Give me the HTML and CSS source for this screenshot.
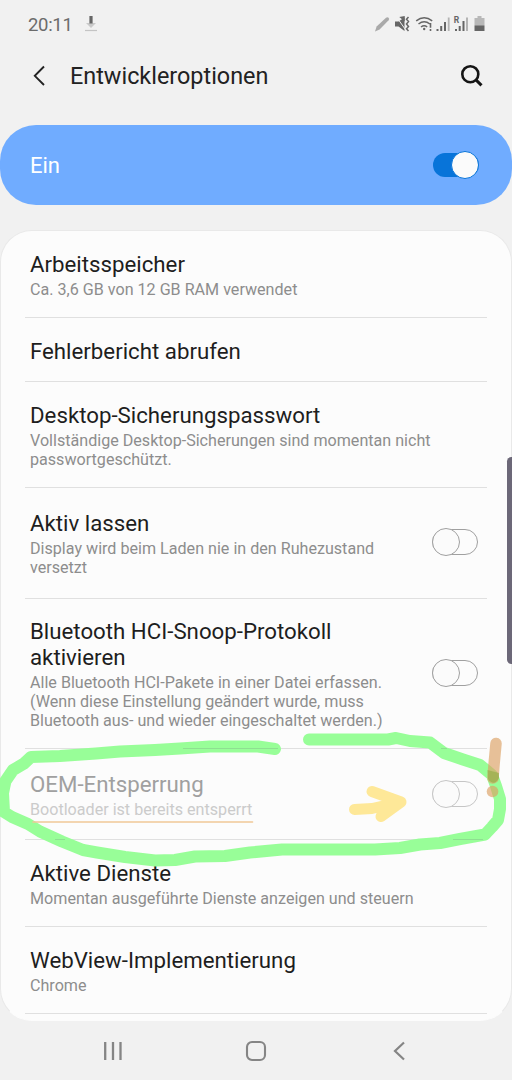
FILE: index.html
```html
<!DOCTYPE html>
<html lang="de">
<head>
<meta charset="utf-8">
<title>Entwickleroptionen</title>
<link rel="stylesheet" href="styles.css">
</head>
<body>
<div class="screen">
  <div class="statusbar">
    <span class="time">20:11</span>
    <svg class="download" width="14" height="18" viewBox="0 0 14 18"><path d="M2 8h10l-5 5z" fill="#c9c9c9"/><path d="M5.400 1h3.200v7.500H5.400z" fill="#666"/><path d="M1 15.500h12" stroke="#c4c4c4" stroke-width="1.200"/></svg>
    <svg class="indicators" width="112" height="20" viewBox="374 14 112 20">
      <path d="M375 31.500l1.600-5L386 17.800q1.400-1.200 2.600 0 1.200 1.200 0 2.500l-9 9.300z" fill="#a9a9a9"/>
      <path d="M395 21.500h3.500l6-4v13.500l-6-4.500H395z" fill="#666"/>
      <path d="M396.500 17l10 14" stroke="#f1f1f1" stroke-width="1"/>
      <path d="M401 17.500l3 2.500v-3zM408.500 17l-2 2.300 2 2.300-2 2.400 2 2.400-2 2.300 2 2.300" fill="none" stroke="#666" stroke-width="1.500"/>
      <g fill="none" stroke="#666" stroke-width="1.500"><path d="M416.200 20.800q8-6 16 0"/><path d="M418.500 24q5.700-4.500 11.400 0"/><path d="M421 27q3.200-2.500 6.200 0"/></g>
      <circle cx="424.200" cy="29" r="1.200" fill="#666"/>
      <path d="M430.500 23v4.700M430.500 29v2" stroke="#666" stroke-width="1.600"/>
      <g fill="#666"><path d="M436.500 29h2v2h-2zM440.200 26h2v5h-2zM444 22h2v9h-2z"/><path d="M455 29h2v2h-2zM458.700 26h2v5h-2zM462.500 21h2v10h-2z"/></g>
      <path d="M447.800 17.500h1.800V31h-1.800zM466 17.500h2V31h-2z" fill="#b4b4b4"/>
      <text class="roaming" x="453.700" y="23">R</text>
      <path d="M477.500 16h4v2h3v7h-10v-7h3z" fill="#b8b8b8"/><path d="M474.500 25.300h10V31h-10z" fill="#666"/>
    </svg>
  </div>
  <header class="appbar">
    <svg class="back" width="14" height="22" viewBox="0 0 14 22"><path d="M12 1.500L2.800 10.800 12 20" fill="none" stroke="#222" stroke-width="1.900"/></svg>
    <h1>Entwickleroptionen</h1>
    <svg width="24" height="24" viewBox="0 0 24 24"><circle cx="10.300" cy="10.200" r="8" fill="none" stroke="#151515" stroke-width="2.600"/><path d="M15.700 15.700l5.800 5.600" stroke="#151515" stroke-width="3"/></svg>
  </header>
  <div class="master"><span>Ein</span><span class="switch on"><i></i></span></div>
  <main class="panel">
    <section class="row r1"><div><h2>Arbeitsspeicher</h2><p>Ca. 3,6 GB von 12 GB RAM verwendet</p></div></section>
    <section class="row r2"><div><h2>Fehlerbericht abrufen</h2></div></section>
    <section class="row r3"><div><h2>Desktop-Sicherungspasswort</h2><p>Vollständige Desktop-Sicherungen sind momentan nicht<br>passwortgeschützt.</p></div></section>
    <section class="row r4"><div><h2>Aktiv lassen</h2><p>Display wird beim Laden nie in den Ruhezustand<br>versetzt</p></div><span class="switch"><i></i></span></section>
    <section class="row r5"><div><h2>Bluetooth HCI-Snoop-Protokoll<br>aktivieren</h2><p>Alle Bluetooth HCI-Pakete in einer Datei erfassen.<br>(Wenn diese Einstellung geändert wurde, muss<br>Bluetooth aus- und wieder eingeschaltet werden.)</p></div><span class="switch"><i></i></span></section>
    <section class="row r6 disabled"><div><h2>OEM-Entsperrung</h2><p>Bootloader ist bereits entsperrt</p></div><span class="switch"><i></i></span></section>
    <section class="row r7"><div><h2>Aktive Dienste</h2><p>Momentan ausgeführte Dienste anzeigen und steuern</p></div></section>
    <section class="row r8"><div><h2>WebView-Implementierung</h2><p>Chrome</p></div></section>
  </main>
  <nav class="navbar">
    <svg width="20" height="22" viewBox="0 0 20 22"><path d="M2.200 2v18M10 2v18M17.500 2v18" stroke="#858585" stroke-width="2.300"/></svg>
    <svg width="22" height="22" viewBox="0 0 22 22"><rect x="2" y="2" width="18" height="18" rx="5" fill="none" stroke="#858585" stroke-width="2.100"/></svg>
    <svg width="14" height="22" viewBox="0 0 14 22"><path d="M12 2.500L3 11l9 8.500" fill="none" stroke="#858585" stroke-width="2.200"/></svg>
  </nav>
  <div class="edge-handle"></div>
  <svg class="marker" width="512" height="1080" viewBox="0 0 512 1080" fill="none" stroke-linecap="round" stroke-linejoin="round">
    <path d="M275 749L258 746.500H210L180 748.500 155 750 120 751.500 96 753.500 60 756 31 757 24 763.500 13 770 5.500 781 3 793 4 812 12 817 28 824 40 831.500 62 841.500 83 850 97 852.500 125 857 155 860.500 175 860 195 856.500 225 856 250 852.500 282 849.500H375L400 848 420 844.500 440 843 460 839 485 834.500 492 827 498 820 500 809V799L496 786 492 775 480 765 463 759.500 444 753 430 742.500 410 741 396 738 388 739.500H309" stroke="#98fe98" stroke-width="12"/>
    <path d="M25 748.500H487M25 839.500H487" stroke="#8edf91" stroke-width="1" clip-path="url(#crossings)"/>
    <clipPath id="crossings"><path d="M183 746h95v5h-95zM441 746h6v5h-6zM55 837h10v5H55zM453 837h30v5h-30z"/></clipPath>
    <path d="M354.500 809.500L372 808.500 401 802 372 791.500M401 802L381 816.500" stroke="#fee898" stroke-width="11"/>
    <path d="M33 822H252.500" stroke="#f0c896" stroke-width="1.600"/>
    <g stroke-width="11.500" stroke="#dba063" stroke-opacity=".65"><path d="M496 743.500L494 765 493 778"/><path d="M492.500 791.500h.1"/></g>
    <path d="M487.500 770L499 773 499 778q-5 9-11 1z" fill="#8da83e" fill-opacity=".55"/>
  </svg>
</div>
</body>
</html>
```
FILE: styles.css
```css
* { box-sizing: border-box; }
body { margin: 0; background: #f1f1f1; font-family: Roboto, "Liberation Sans", sans-serif; }
.screen { position: relative; width: 512px; height: 1080px; overflow: hidden; display: flex; flex-direction: column; }
.statusbar { height: 50px; padding: 0 26px 2px 28px; display: flex; align-items: center; }
.time { font-size: 18.500px; line-height: 24px; color: #6b6b6b; letter-spacing: -.3px; padding-top: 2px; width: 56px; }
.indicators { margin-left: auto; }
.roaming { font: 700 8.500px Roboto, sans-serif; fill: #666; }
.appbar { height: 75px; padding: 0 28px 24px 32px; display: flex; align-items: center; }
.appbar h1 { flex: 1; margin: 0 0 0 24px; font-size: 23.400px; line-height: 30px; font-weight: 400; color: #222; }
.master { flex: none; height: 80px; border-radius: 36px; background: #70acff; color: #fff; font-size: 22px; padding: 0 33px 0 30px; display: flex; align-items: center; justify-content: space-between; }
.panel { flex: none; height: 791px; margin-top: 25px; background: #fcfcfc; border: 1px solid #e9e9e9; border-bottom-color: #fcfcfc; border-radius: 32px; padding: 0 24px; }
.row { display: flex; align-items: center; justify-content: space-between; padding: 2px 9px 0 5px; border-bottom: 1px solid #e0e0e0; }
.r1 { height: 87px; }
.r2 { height: 64px; }
.r3 { height: 106px; }
.r4 { height: 111px; padding-top: 0; }
.r5 { height: 150px; padding-top: 0; }
.r6 { height: 91px; }
.r7 { height: 87px; }
.r8 { height: 87px; }
h2 { margin: 0; font-size: 22.250px; font-weight: 400; line-height: 26px; color: #1e1e1e; white-space: nowrap; }
p { margin: 3px 0 0; font-size: 16.120px; line-height: 19px; color: #8d8d8d; white-space: nowrap; }
.disabled h2 { color: #a0a0a0; }
.disabled p { color: #cbcbcb; }
.switch { position: relative; flex: none; width: 46px; height: 26px; margin-bottom: 2px; border: 1px solid #a0a0a0; border-radius: 13px; }
.switch i { position: absolute; left: -1px; top: -2px; width: 28px; height: 28px; border: 1px solid #a0a0a0; border-radius: 50%; background: #fbfbfb; }
.switch.on { height: 24px; margin-bottom: 0; background: #0874d9; border: 0; }
.switch.on i { left: 18px; border-color: #0874d9; }
.disabled .switch, .disabled .switch i { border-color: #c6c6c6; }
.navbar { flex: 1; display: flex; justify-content: space-between; align-items: center; padding: 0 106px 0 103px; }
.navbar svg:nth-child(2) { margin-right: 4px; }
.edge-handle { position: absolute; right: -4px; top: 457px; width: 9px; height: 207px; border-radius: 5px; background: #6c6878; }
.marker { position: absolute; left: 0; top: 0; }
```
